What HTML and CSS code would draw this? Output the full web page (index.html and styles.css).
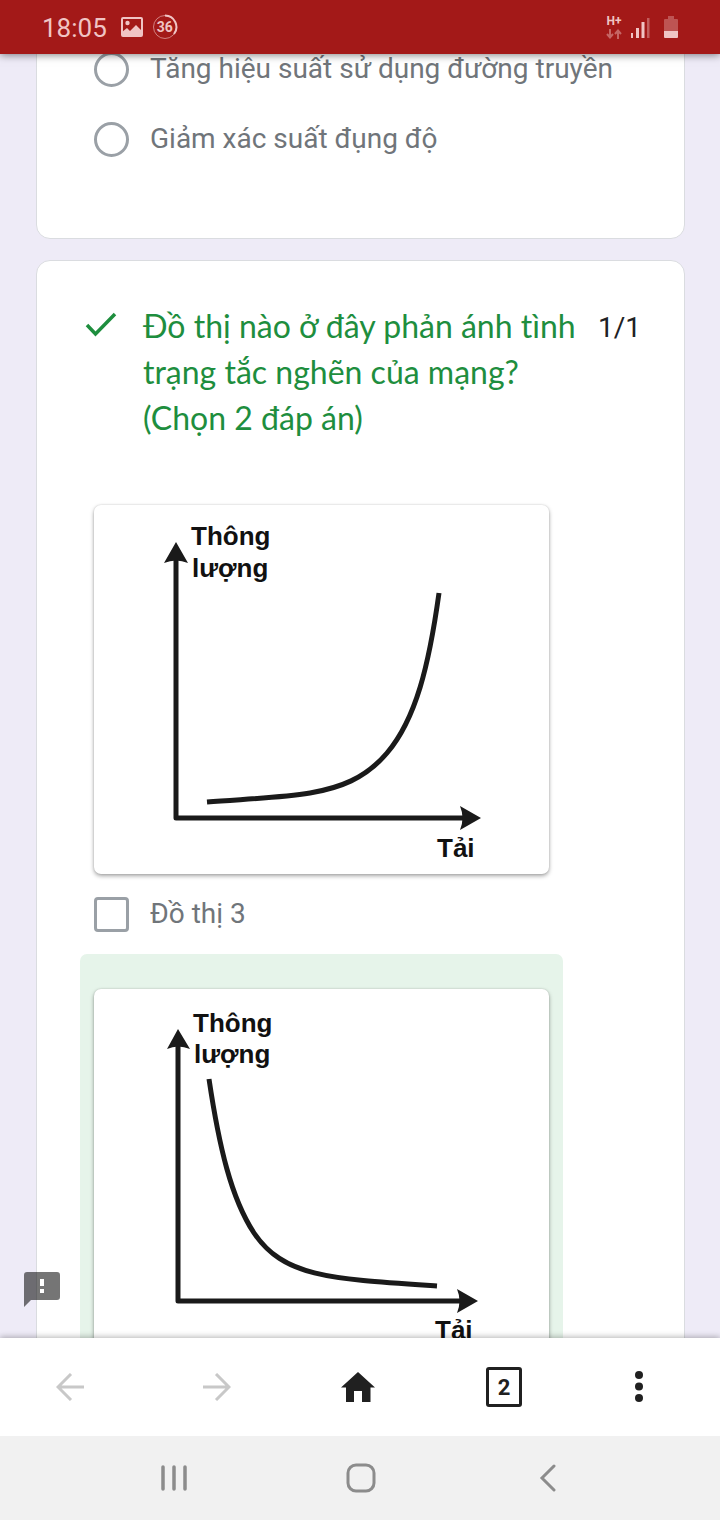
FILE: index.html
```html
<!DOCTYPE html>
<html lang="vi">
<head>
<meta charset="utf-8">
<meta name="viewport" content="width=device-width, initial-scale=1">
<title>Bài kiểm tra</title>
<link rel="stylesheet" href="styles.css">
</head>
<body>
<header class="status">
  <span class="clock">18:05</span>
  <svg class="status-picture" width="22" height="20" viewBox="0 0 22 20"><rect x="1" y="1" width="20" height="18" rx="1" fill="none" stroke="currentColor" stroke-width="2"/><circle cx="6.500" cy="6" r="2.200" fill="currentColor"/><path d="M1 18V15l5-4 3 3 6-6 6 6v4z" fill="currentColor"/></svg>
  <span class="counter">
    <svg class="ring" width="26" height="26" viewBox="0 0 26 26" fill="none" stroke="currentColor"><circle cx="13" cy="13" r="11.500" stroke-width="1" opacity=".6"/><path d="M13 1.500A11.500 11.500 0 0 1 22 20" stroke-width="2"/></svg>
    <span class="count">36</span>
  </span>
  <span class="spacer"></span>
  <span class="network">H+
    <svg width="16" height="10" viewBox="0 0 16 10" fill="none" stroke="currentColor" stroke-width="2" opacity=".45"><path d="M4 0v8M1 5l3 3.500L7 5M12 10V2M9 5l3-3.500L15 5"/></svg>
  </span>
  <svg class="signal" width="19" height="21" viewBox="0 0 19 21" fill="currentColor"><path d="M0 16h2v5H0zM5 11h3v10H5zM10.500 5h3v16h-3z"/><path d="M16 1h2.500v20H16z" opacity=".4"/></svg>
  <svg width="14" height="22" viewBox="0 0 14 22" fill="currentColor"><path d="M4 0h6v3h3q1 0 1 1v11H0V4q0-1 1-1h3z" opacity=".35"/><path d="M0 15h14v6q0 1-1 1H1q-1 0-1-1z"/></svg>
</header>

<main class="page">
  <div class="feed">
    <section class="card card-prev">
      <label class="choice"><input type="radio" name="q1" class="radio"><span>Tăng hiệu suất sử dụng đường truyền</span></label>
      <label class="choice"><input type="radio" name="q1" class="radio"><span>Giảm xác suất đụng độ</span></label>
    </section>

    <section class="card card-question">
      <div class="question">
        <svg class="tick" width="32" height="46" viewBox="0 0 32 46" fill="none" stroke="currentColor" stroke-width="3.500"><path d="M2 22l8.500 9L30 11"/></svg>
        <h2 class="title">Đồ thị nào ở đây phản ánh tình trạng tắc nghẽn của mạng? (Chọn 2 đáp án)</h2>
        <span class="score">1/1</span>
      </div>

      <div class="option">
        <div class="figure">
          <svg class="graph" viewBox="0 0 455 369" role="img" aria-label="Đồ thị 3">
            <path class="line" d="M82 52V313H370"/>
            <path class="head" d="M82 37L94 58Q82 53 70 58ZM387 313L366 325Q371 313 366 301Z"/>
            <path class="line" d="M113 297C150 294 185 293 216 288C245 283 271 274 293 248C322 214 335 160 345 88"/>
            <text x="97" y="40">Thông</text><text x="98" y="72">lượng</text><text x="343" y="352">Tải</text>
          </svg>
        </div>
        <label class="choice"><input type="checkbox" class="box"><span>Đồ thị 3</span></label>
      </div>

      <div class="option option-correct">
        <div class="figure">
          <svg class="graph" viewBox="0 0 455 369" role="img" aria-label="Đồ thị">
            <path class="line" d="M84 54V312H367"/>
            <path class="head" d="M84 40L96 60Q84 55 73 60ZM384 312L363 324Q368 312 363 300Z"/>
            <path class="line" d="M115 90C125 157 137 209 160 244C190 288 235 290 343 297"/>
            <text x="99" y="43">Thông</text><text x="100" y="74">lượng</text><text x="341" y="350">Tải</text>
          </svg>
        </div>
      </div>
    </section>
  </div>
  <button class="feedback" aria-label="Phản hồi"><svg width="36" height="35" viewBox="0 0 36 35"><path fill="currentColor" fill-rule="evenodd" d="M3 0H33q3 0 3 3V25q0 3-3 3H7L0 35V3Q0 0 3 0ZM16 7v7h4V7zM16 17v4h4v-4z"/><path fill="#fff" d="M16 7h4v7h-4zM16 17h4v4h-4z"/></svg></button>
</main>

<nav class="toolbar">
  <button class="tool tool-off" aria-label="Trở lại"><svg width="28" height="28" viewBox="0 0 28 28" fill="none" stroke="currentColor" stroke-width="3"><path d="M28 14H2M15 1L2 14l13 13"/></svg></button>
  <button class="tool tool-off" aria-label="Tiếp"><svg width="28" height="28" viewBox="0 0 28 28" fill="none" stroke="currentColor" stroke-width="3"><path d="M0 14h26M13 1l13 13-13 13"/></svg></button>
  <button class="tool" aria-label="Trang chủ"><svg width="34" height="30" viewBox="0 0 34 30" fill="currentColor"><path d="M17 0L34 15.500H29.500V30H21V19H13V30H5V15.500H0Z"/></svg></button>
  <button class="tool" aria-label="Thẻ"><span class="tabs">2</span></button>
  <button class="tool" aria-label="Thêm"><svg width="8" height="32" viewBox="0 0 8 32" fill="currentColor"><circle cx="4" cy="4" r="4"/><circle cx="4" cy="15.500" r="4"/><circle cx="4" cy="27" r="4"/></svg></button>
</nav>

<nav class="system">
  <button class="key" aria-label="Gần đây"><svg width="26" height="28" viewBox="0 0 26 28" fill="none" stroke="currentColor" stroke-width="3.500" stroke-linecap="round"><path d="M2 3v22M13 3v22M24 3v22"/></svg></button>
  <button class="key" aria-label="Màn hình chính"><svg width="30" height="30" viewBox="0 0 30 30" fill="none" stroke="currentColor" stroke-width="3"><rect x="2" y="2" width="26" height="26" rx="8"/></svg></button>
  <button class="key" aria-label="Quay lại"><svg width="18" height="28" viewBox="0 0 18 28" fill="none" stroke="currentColor" stroke-width="3" stroke-linecap="round"><path d="M15 2L3 14l12 12"/></svg></button>
</nav>
</body>
</html>
```
FILE: styles.css
```css
* { box-sizing: border-box; }
body {
  margin: 0;
  height: 100vh;
  display: flex;
  flex-direction: column;
  background: #eeebf7;
  font-family: Roboto, "Noto Sans", sans-serif;
  color: #202124;
}
svg { display: block; flex: none; }
button { border: 0; padding: 0; background: none; color: inherit; font: inherit; }

.status {
  flex: none;
  height: 54px;
  padding: 0 42px;
  display: flex;
  align-items: center;
  background: #a31918;
  color: #f0c4c4;
  box-shadow: 0 1px 8px rgba(0, 0, 0, .5);
  z-index: 1;
}
.clock { padding-top: 2px; font-size: 26px; line-height: 32px; margin-right: 14px; }
.status-picture { margin-right: 9px; }
.counter { display: grid; place-items: center; }
.ring, .count { grid-area: 1 / 1; }
.count { font-size: 14px; font-weight: 700; }
.spacer { flex: 1; }
.network {
  display: flex;
  flex-direction: column;
  align-items: center;
  gap: 2px;
  margin-right: 9px;
  font-size: 12px;
  line-height: 12px;
  font-weight: 700;
}
.signal { margin-right: 14px; }

.page { flex: 1; min-height: 0; overflow: hidden; position: relative; }
.feed {
  display: flex;
  flex-direction: column;
  gap: 21px;
  margin-top: -21px;
  padding: 0 35px 0 36px;
}
.card { background: #fff; border: 1px solid #dadce0; border-radius: 14px; }
.card-prev { padding: 0 43px 64px; }
.card-question { padding: 42px 43px; }

.choice {
  display: flex;
  align-items: center;
  gap: 21px;
  height: 70px;
  padding: 0 14px;
  color: #70757a;
  font-size: 28px;
  line-height: 36px;
}
.radio, .box {
  appearance: none;
  flex: none;
  width: 35px;
  height: 35px;
  margin: 0;
  border: 3px solid #9aa0a6;
  border-radius: 50%;
}
.box { border-radius: 4px; }

.question { display: flex; align-items: flex-start; padding: 0 0 29px 5px; }
.tick { color: #1e8e3e; margin-right: 26px; }
.title {
  flex: 1;
  margin: 0;
  color: #1e8e3e;
  font-family: Lato, Roboto, sans-serif;
  font-size: 32px;
  line-height: 46px;
  font-weight: 400;
  font-variant-ligatures: none;
}
.score { margin-left: 14px; font-size: 28px; line-height: 50px; }

.option { max-width: 483px; padding-top: 35px; border-radius: 7px; }
.option .choice { height: 80px; }
.option-correct { background: #e6f4ea; }
.option-correct .figure { margin-bottom: 80px; }
.figure {
  margin: 0 14px;
  background: #fff;
  border-radius: 7px;
  box-shadow: 0 2px 4px rgba(0, 0, 0, .35), 0 0 2px rgba(0, 0, 0, .15);
}
.graph { width: 100%; height: auto; fill: #111; font: 700 26px "Liberation Sans", Arial, sans-serif; }
.line { fill: none; stroke: #1a1a1a; stroke-width: 5; stroke-linejoin: round; }
.head { fill: #1a1a1a; }

.feedback { position: absolute; left: 24px; bottom: 31px; color: rgba(0, 0, 0, .54); }

.toolbar {
  flex: none;
  height: 98px;
  padding-right: 28px;
  display: grid;
  grid-template-columns: 140fr 154fr 128fr 164fr 106fr;
  background: #fff;
  color: #202020;
  box-shadow: 0 -1px 6px rgba(0, 0, 0, .3);
  z-index: 1;
}
.tool, .key { display: grid; place-items: center; }
.tool-off { color: #c8c8c8; }
.tabs {
  width: 36px;
  height: 40px;
  border: 3px solid #202020;
  border-radius: 3px;
  font-size: 22px;
  line-height: 36px;
  font-weight: 700;
}

.system {
  flex: none;
  height: 84px;
  padding: 0 78px 0 80px;
  display: grid;
  grid-template-columns: repeat(3, 1fr);
  background: #f1f1f1;
  color: #8c8c8c;
  z-index: 1;
}
```
